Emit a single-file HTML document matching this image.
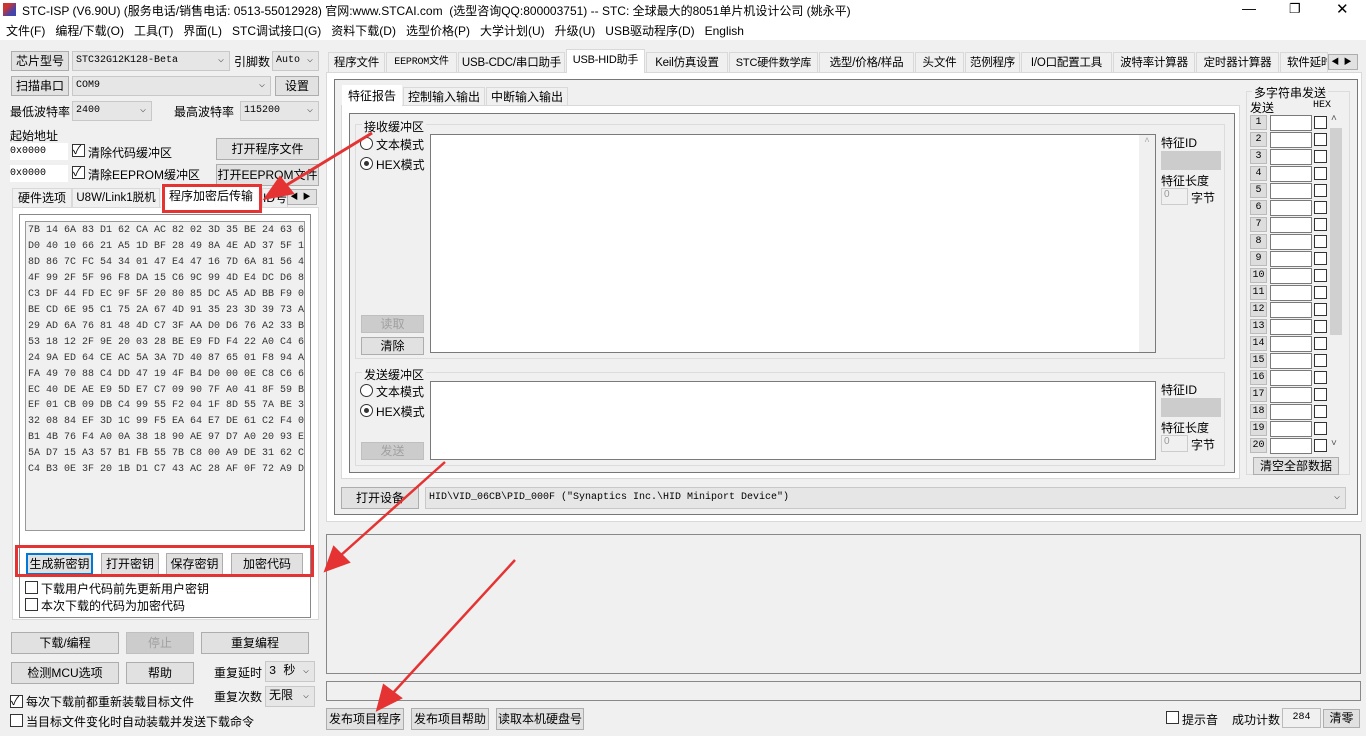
<!DOCTYPE html><html><head><meta charset="utf-8"><style>
*{box-sizing:border-box;margin:0;padding:0}
body{width:1366px;height:736px;background:#f0f0f0;font-family:"Liberation Sans","Noto Sans CJK SC",sans-serif;font-size:12px;color:#000;position:relative;overflow:hidden}
.a{position:absolute;white-space:nowrap}
.btn{position:absolute;background:#e1e1e1;border:1px solid #adadad;text-align:center;font-size:12px;white-space:nowrap;overflow:hidden}
.dis{color:#a0a0a0;background:#ccc;border-color:#bfbfbf}
.cb{position:absolute;background:#e6e6e6;border:1px solid #c8c8c8;font-family:"Liberation Mono","Noto Sans CJK SC",monospace;font-size:10px;padding-left:3px;white-space:nowrap}
.cb:after{content:"⌵";position:absolute;right:5px;top:0;color:#555;font-size:10px}
.ed{position:absolute;background:#fff;border:1px solid #7a7a7a}
.chk{position:absolute;width:13px;height:13px;border:1px solid #333;background:#fff}
.rad{position:absolute;width:13px;height:13px;border:1px solid #333;border-radius:50%;background:#fff}
.grp{position:absolute;border:1px solid #dcdcdc}
.tab{position:absolute;border:1px solid #d9d9d9;background:#f0f0f0;text-align:center;top:52px;height:21px;line-height:20px;white-space:nowrap;overflow:hidden;font-size:11.5px;letter-spacing:-0.2px}
.mono{font-family:"Liberation Mono","Noto Sans CJK SC",monospace}
</style></head><body>
<div class="a" style="left:0;top:0;width:1366px;height:40px;background:#fff"></div>
<div class="a" style="left:3px;top:3px;width:13px;height:13px;background:linear-gradient(135deg,#c33 30%,#44a 70%)"></div>
<div class="a" style="left:22px;top:2px;font-size:12px">STC-ISP (V6.90U) (服务电话/销售电话: 0513-55012928) 官网:www.STCAI.com &nbsp;(选型咨询QQ:800003751) -- STC: 全球最大的8051单片机设计公司 (姚永平)</div>
<div class="a" style="left:1242px;top:0;font-size:14px">—</div><div class="a" style="left:1289px;top:1px;font-size:13px">❐</div><div class="a" style="left:1336px;top:0;font-size:15px">✕</div>
<div class="a" style="left:6px;top:22px">文件(F) &nbsp;&nbsp;编程/下载(O) &nbsp;&nbsp;工具(T) &nbsp;&nbsp;界面(L) &nbsp;&nbsp;STC调试接口(G) &nbsp;&nbsp;资料下载(D) &nbsp;&nbsp;选型价格(P) &nbsp;&nbsp;大学计划(U) &nbsp;&nbsp;升级(U) &nbsp;&nbsp;USB驱动程序(D) &nbsp;&nbsp;English</div>

<!-- left top -->
<div class="btn" style="left:11px;top:51px;width:58px;height:20px;line-height:18px">芯片型号</div>
<div class="cb" style="left:72px;top:51px;width:158px;height:20px;line-height:18px">STC32G12K128-Beta</div>
<div class="a" style="left:234px;top:53px">引脚数</div>
<div class="cb" style="left:272px;top:51px;width:47px;height:20px;line-height:18px">Auto</div>
<div class="btn" style="left:11px;top:76px;width:58px;height:20px;line-height:18px">扫描串口</div>
<div class="cb" style="left:72px;top:76px;width:199px;height:20px;line-height:18px">COM9</div>
<div class="btn" style="left:275px;top:76px;width:44px;height:20px;line-height:18px">设置</div>
<div class="a" style="left:10px;top:103px">最低波特率</div>
<div class="cb" style="left:72px;top:101px;width:80px;height:20px;line-height:18px">2400</div>
<div class="a" style="left:174px;top:103px">最高波特率</div>
<div class="cb" style="left:240px;top:101px;width:79px;height:20px;line-height:18px">115200</div>
<div class="a" style="left:10px;top:127px">起始地址</div>
<div class="a mono" style="left:10px;top:143px;width:58px;height:17px;background:#fff;font-size:10px;line-height:17px">0x0000</div>
<div class="chk" style="left:72px;top:144px"></div><div class="a" style="left:73px;top:141px;font-size:12px">✓</div>
<div class="a" style="left:88px;top:144px">清除代码缓冲区</div>
<div class="a mono" style="left:10px;top:165px;width:58px;height:17px;background:#fff;font-size:10px;line-height:17px">0x0000</div>
<div class="chk" style="left:72px;top:166px"></div><div class="a" style="left:73px;top:163px">✓</div>
<div class="a" style="left:88px;top:166px">清除EEPROM缓冲区</div>
<div class="btn" style="left:216px;top:138px;width:103px;height:22px;line-height:20px">打开程序文件</div>
<div class="btn" style="left:216px;top:164px;width:103px;height:22px;line-height:20px">打开EEPROM文件</div>
<!-- left tabs -->
<div class="a" style="left:12px;top:207px;width:307px;height:413px;background:#fff;border:1px solid #d9d9d9"></div>
<div class="a" style="left:12px;top:188px;width:60px;height:20px;border:1px solid #d9d9d9;text-align:center;line-height:19px">硬件选项</div>
<div class="a" style="left:72px;top:188px;width:88px;height:20px;border:1px solid #d9d9d9;text-align:center;line-height:19px;font-size:11.5px;overflow:hidden">U8W/Link1脱机</div>
<div class="a" style="left:161px;top:184px;width:100px;height:24px;background:#fff;text-align:center;line-height:24px">程序加密后传输</div>
<div class="a" style="left:262px;top:188px;width:26px;height:20px;border:1px solid #d9d9d9;line-height:19px;overflow:hidden">ID号</div>
<div class="a" style="left:287px;top:189px;width:30px;height:16px;background:#e1e1e1;border:1px solid #adadad;font-size:8px;line-height:14px">&nbsp;◀ &nbsp;▶</div>
<div class="a" style="left:19px;top:214px;width:292px;height:404px;border:1px solid #888"></div>
<div class="a mono" style="left:25px;top:221px;width:280px;height:310px;background:#f0f0f0;border:1px solid #999;font-size:10px;line-height:15.95px;color:#333;padding:1px 0 0 2px;overflow:hidden">7B 14 6A 83 D1 62 CA AC 82 02 3D 35 BE 24 63 6<br>D0 40 10 66 21 A5 1D BF 28 49 8A 4E AD 37 5F 1<br>8D 86 7C FC 54 34 01 47 E4 47 16 7D 6A 81 56 4<br>4F 99 2F 5F 96 F8 DA 15 C6 9C 99 4D E4 DC D6 8<br>C3 DF 44 FD EC 9F 5F 20 80 85 DC A5 AD BB F9 0<br>BE CD 6E 95 C1 75 2A 67 4D 91 35 23 3D 39 73 A<br>29 AD 6A 76 81 48 4D C7 3F AA D0 D6 76 A2 33 B<br>53 18 12 2F 9E 20 03 28 BE E9 FD F4 22 A0 C4 6<br>24 9A ED 64 CE AC 5A 3A 7D 40 87 65 01 F8 94 A<br>FA 49 70 88 C4 DD 47 19 4F B4 D0 00 0E C8 C6 6<br>EC 40 DE AE E9 5D E7 C7 09 90 7F A0 41 8F 59 B<br>EF 01 CB 09 DB C4 99 55 F2 04 1F 8D 55 7A BE 3<br>32 08 84 EF 3D 1C 99 F5 EA 64 E7 DE 61 C2 F4 0<br>B1 4B 76 F4 A0 0A 38 18 90 AE 97 D7 A0 20 93 E<br>5A D7 15 A3 57 B1 FB 55 7B C8 00 A9 DE 31 62 C<br>C4 B3 0E 3F 20 1B D1 C7 43 AC 28 AF 0F 72 A9 D</div>
<div class="btn" style="left:26px;top:553px;width:67px;height:22px;line-height:18px;border:2px solid #0078d7">生成新密钥</div>
<div class="btn" style="left:101px;top:553px;width:58px;height:22px;line-height:20px">打开密钥</div>
<div class="btn" style="left:166px;top:553px;width:57px;height:22px;line-height:20px">保存密钥</div>
<div class="btn" style="left:231px;top:553px;width:72px;height:22px;line-height:20px">加密代码</div>
<div class="chk" style="left:25px;top:581px"></div><div class="a" style="left:41px;top:580px">下载用户代码前先更新用户密钥</div>
<div class="chk" style="left:25px;top:598px"></div><div class="a" style="left:41px;top:597px">本次下载的代码为加密代码</div>
<!-- left bottom -->
<div class="btn" style="left:11px;top:632px;width:108px;height:22px;line-height:20px">下载/编程</div>
<div class="btn dis" style="left:126px;top:632px;width:68px;height:22px;line-height:20px">停止</div>
<div class="btn" style="left:201px;top:632px;width:108px;height:22px;line-height:20px">重复编程</div>
<div class="btn" style="left:11px;top:662px;width:108px;height:22px;line-height:20px">检测MCU选项</div>
<div class="btn" style="left:126px;top:662px;width:68px;height:22px;line-height:20px">帮助</div>
<div class="a" style="left:214px;top:664px">重复延时</div>
<div class="cb" style="left:265px;top:661px;width:50px;height:21px;line-height:19px;font-size:12px">3 秒</div>
<div class="a" style="left:214px;top:688px">重复次数</div>
<div class="cb" style="left:265px;top:686px;width:50px;height:21px;line-height:19px;font-size:12px">无限</div>
<div class="chk" style="left:10px;top:695px"></div><div class="a" style="left:11px;top:692px">✓</div>
<div class="a" style="left:26px;top:693px">每次下载前都重新装载目标文件</div>
<div class="chk" style="left:10px;top:714px"></div><div class="a" style="left:26px;top:713px">当目标文件变化时自动装载并发送下载命令</div>

<!-- right top tabs -->
<div class="a" style="left:326px;top:72px;width:1036px;height:450px;background:#fff;border:1px solid #d9d9d9"></div>
<div class="tab" style="left:328px;width:57px">程序文件</div>
<div class="tab mono" style="left:386px;width:71px;font-size:10px">EEPROM文件</div>
<div class="tab" style="left:458px;width:107px">USB-CDC/串口助手</div>
<div class="tab" style="left:566px;top:49px;width:79px;height:24px;background:#fff;border-bottom:none;font-size:11px">USB-HID助手</div>
<div class="tab" style="left:646px;width:82px">Keil仿真设置</div>
<div class="tab" style="left:729px;width:89px;font-size:11px">STC硬件数学库</div>
<div class="tab" style="left:819px;width:95px">选型/价格/样品</div>
<div class="tab" style="left:915px;width:49px">头文件</div>
<div class="tab" style="left:965px;width:55px">范例程序</div>
<div class="tab" style="left:1021px;width:91px">I/O口配置工具</div>
<div class="tab" style="left:1113px;width:82px">波特率计算器</div>
<div class="tab" style="left:1196px;width:83px">定时器计算器</div>
<div class="tab" style="left:1280px;width:48px;text-align:left;padding-left:6px">软件延时</div>
<div class="a" style="left:1328px;top:54px;width:30px;height:16px;background:#e1e1e1;border:1px solid #adadad;font-size:8px;line-height:14px">&nbsp;◀ &nbsp;▶</div>
<div class="a" style="left:334px;top:79px;width:1024px;height:436px;border:1px solid #777;background:#f0f0f0"></div>
<div class="a" style="left:341px;top:105px;width:899px;height:374px;background:#fff;border:1px solid #d9d9d9"></div>
<div class="a" style="left:342px;top:85px;width:60px;height:22px;background:#fff;text-align:center;line-height:22px">特征报告</div>
<div class="a" style="left:403px;top:87px;width:82px;height:19px;border:1px solid #d9d9d9;text-align:center;line-height:18px">控制输入输出</div>
<div class="a" style="left:486px;top:87px;width:82px;height:19px;border:1px solid #d9d9d9;text-align:center;line-height:18px">中断输入输出</div>
<div class="a" style="left:349px;top:113px;width:886px;height:360px;border:1px solid #777;background:#f0f0f0"></div>
<div class="grp" style="left:355px;top:124px;width:870px;height:235px"></div>
<div class="a" style="left:362px;top:118px;background:#f0f0f0;padding:0 2px">接收缓冲区</div>
<div class="rad" style="left:360px;top:137px"></div><div class="a" style="left:376px;top:136px">文本模式</div>
<div class="rad" style="left:360px;top:157px"></div><div class="a" style="left:364px;top:161px;width:5px;height:5px;border-radius:50%;background:#333"></div><div class="a" style="left:376px;top:156px">HEX模式</div>
<div class="ed" style="left:430px;top:134px;width:726px;height:219px"></div>
<div class="a" style="left:1139px;top:135px;width:16px;height:217px;background:#f0f0f0;color:#aaa;font-size:9px;text-align:center">˄</div>
<div class="btn dis" style="left:361px;top:315px;width:63px;height:18px;line-height:16px">读取</div>
<div class="btn" style="left:361px;top:337px;width:63px;height:18px;line-height:16px">清除</div>
<div class="a" style="left:1161px;top:134px">特征ID</div>
<div class="a" style="left:1161px;top:151px;width:60px;height:19px;background:#ccc"></div>
<div class="a" style="left:1161px;top:172px">特征长度</div>
<div class="a" style="left:1161px;top:188px;width:27px;height:17px;border:1px solid #ccc;color:#999;font-size:10px;padding-left:2px">0</div>
<div class="a" style="left:1191px;top:189px">字节</div>
<div class="grp" style="left:355px;top:372px;width:870px;height:94px"></div>
<div class="a" style="left:362px;top:366px;background:#f0f0f0;padding:0 2px">发送缓冲区</div>
<div class="rad" style="left:360px;top:384px"></div><div class="a" style="left:376px;top:383px">文本模式</div>
<div class="rad" style="left:360px;top:404px"></div><div class="a" style="left:364px;top:408px;width:5px;height:5px;border-radius:50%;background:#333"></div><div class="a" style="left:376px;top:403px">HEX模式</div>
<div class="ed" style="left:430px;top:381px;width:726px;height:79px"></div>
<div class="btn dis" style="left:361px;top:442px;width:63px;height:18px;line-height:16px">发送</div>
<div class="a" style="left:1161px;top:381px">特征ID</div>
<div class="a" style="left:1161px;top:398px;width:60px;height:19px;background:#ccc"></div>
<div class="a" style="left:1161px;top:419px">特征长度</div>
<div class="a" style="left:1161px;top:435px;width:27px;height:17px;border:1px solid #ccc;color:#999;font-size:10px;padding-left:2px">0</div>
<div class="a" style="left:1191px;top:436px">字节</div>
<!-- multi string -->
<div class="grp" style="left:1246px;top:91px;width:104px;height:384px"></div>
<div class="a" style="left:1252px;top:84px;background:#f0f0f0;padding:0 2px">多字符串发送</div>
<div class="a" style="left:1250px;top:99px">发送</div><div class="a mono" style="left:1313px;top:100px;font-size:10px">HEX</div>
<div id="rows"></div>
<div class="a" style="left:1330px;top:128px;width:12px;height:207px;background:#d0d0d0"></div>
<div class="a" style="left:1331px;top:113px;font-size:10px;color:#555">˄</div>
<div class="a" style="left:1331px;top:438px;font-size:10px;color:#555">˅</div>
<div class="btn" style="left:1253px;top:457px;width:86px;height:18px;line-height:16px">清空全部数据</div>
<!-- device -->
<div class="btn" style="left:341px;top:487px;width:78px;height:22px;line-height:20px">打开设备</div>
<div class="cb" style="left:425px;top:487px;width:921px;height:22px;line-height:20px;font-size:10px">HID\VID_06CB\PID_000F ("Synaptics Inc.\HID Miniport Device")</div>
<!-- output -->
<div class="a" style="left:326px;top:534px;width:1035px;height:140px;border:1px solid #888"></div>
<div class="a" style="left:326px;top:681px;width:1035px;height:20px;border:1px solid #888"></div>
<div class="btn" style="left:326px;top:708px;width:78px;height:22px;line-height:20px">发布项目程序</div>
<div class="btn" style="left:411px;top:708px;width:78px;height:22px;line-height:20px">发布项目帮助</div>
<div class="btn" style="left:496px;top:708px;width:88px;height:22px;line-height:20px">读取本机硬盘号</div>
<div class="chk" style="left:1166px;top:711px"></div><div class="a" style="left:1182px;top:711px">提示音</div>
<div class="a" style="left:1232px;top:711px">成功计数</div>
<div class="a mono" style="left:1282px;top:708px;width:39px;height:20px;border:1px solid #bbb;font-size:10px;line-height:18px;text-align:center">284</div>
<div class="btn" style="left:1323px;top:709px;width:37px;height:19px;line-height:17px">清零</div>
<!-- red -->
<div class="a" style="left:162px;top:184px;width:100px;height:29px;border:3px solid #e53333"></div>
<div class="a" style="left:15px;top:545px;width:299px;height:32px;border:3px solid #e53333"></div>
<svg class="a" style="left:0;top:0" width="1366" height="736">
<g stroke="#e53333" stroke-width="3" fill="#e53333">
<line x1="372" y1="133" x2="285" y2="186"/><polygon points="266,198 280,178 292,193"/>
<line x1="445" y1="462" x2="340" y2="556" stroke-width="2.5"/><polygon points="326,570 334,548 348,562"/>
<line x1="515" y1="560" x2="392" y2="694" stroke-width="2.5"/><polygon points="378,709 384,686 400,698"/>
</g></svg>
<script>
var h='';for(var i=0;i<20;i++){var y=115+i*17;h+='<div class="a mono" style="left:1250px;top:'+y+'px;width:17px;height:15px;background:#ddd;border:1px solid #bbb;font-size:10px;text-align:center;line-height:13px">'+(i+1)+'</div><div class="ed" style="left:1270px;top:'+y+'px;width:42px;height:16px"></div><div class="chk" style="left:1314px;top:'+(y+1)+'px"></div>';}
document.getElementById('rows').innerHTML=h;
</script>
</body></html>
